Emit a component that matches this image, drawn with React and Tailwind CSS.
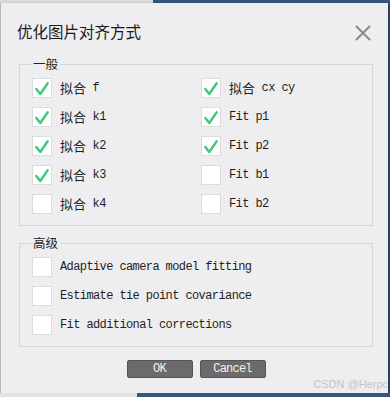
import React from 'react';

const mono = { fontFamily: '"Liberation Mono", "Noto Sans CJK SC", monospace' };
const cjk = { fontFamily: '"Noto Sans CJK SC", "Noto Sans", sans-serif' };

const general = [
  ['拟合', 'f', true],
  ['拟合', 'cx cy', true],
  ['拟合', 'k1', true],
  [null, 'Fit p1', true],
  ['拟合', 'k2', true],
  [null, 'Fit p2', true],
  ['拟合', 'k3', true],
  [null, 'Fit b1', false],
  ['拟合', 'k4', false],
  [null, 'Fit b2', false],
];

const advanced = [
  'Adaptive camera model fitting',
  'Estimate tie point covariance',
  'Fit additional corrections',
];

function Box({ checked }) {
  return (
    <div className="w-[20px] h-[20px] bg-white border border-[#dcdcdc] shrink-0">
      {checked && (
        <svg width="18" height="18" viewBox="0 0 18 18">
          <path d="M3.3 10 L7.3 15 L14.7 4.3" fill="none" stroke="#3cc97a" strokeWidth="2.4" strokeLinecap="round" strokeLinejoin="round" />
        </svg>
      )}
    </div>
  );
}

function Label({ cn, latin }) {
  return (
    <span className="flex items-center text-[#1e1e1e] whitespace-pre">
      {cn && <span className="text-[13px] leading-[20px]" style={cjk}>{cn}</span>}
      <span className="text-[12px] leading-[20px] tracking-[-0.6px]" style={mono}>
        {cn ? ' ' + latin : latin}
      </span>
    </span>
  );
}

function Group({ title, children, className = '' }) {
  return (
    <fieldset className={`ml-[18px] mr-[15px] border border-[#d6d6d8] pl-[12px] pt-[7px] pb-[11px] ${className}`}>
      <legend className="px-[2px] -ml-[1px] text-[12.5px] leading-[14px] text-[#222]" style={cjk}>
        {title}
      </legend>
      {children}
    </fieldset>
  );
}

export default function App() {
  return (
    <div className="w-[390px] h-[397px] bg-[#2f4f78] overflow-hidden flex flex-col">
      <div className="h-[3px] flex shrink-0">
        <div className="w-[153px] bg-[#dcdcdc]" />
        <div className="flex-1 bg-[#34557e]" />
      </div>
      <div className="w-[388px] h-[390px] bg-[#eeeef0] border-l border-[#b8b8b8] shadow-[1px_1px_3px_rgba(0,0,0,0.35)] flex flex-col shrink-0">
        <div className="flex items-start justify-between h-[54px] pl-[16px] pr-[16px]">
          <h1 className="pt-[17px] text-[15.5px] leading-[22px] text-[#1a1a1a]" style={cjk}>
            优化图片对齐方式
          </h1>
          <svg className="mt-[21px]" width="18" height="18" viewBox="0 0 18 18">
            <path d="M2 2 L16 16 M16 2 L2 16" stroke="#8a8a8a" strokeWidth="2" />
          </svg>
        </div>

        <Group title="一般">
          <div className="grid grid-cols-[169px_1fr] gap-y-[9px]">
            {general.map(([cn, latin, checked], i) => (
              <div key={i} className="flex items-center gap-[8px]">
                <Box checked={checked} />
                <Label cn={cn} latin={latin} />
              </div>
            ))}
          </div>
        </Group>

        <Group title="高级" className="mt-[10px]">
          <div className="flex flex-col gap-[9px]">
            {advanced.map((t) => (
              <div key={t} className="flex items-center gap-[8px]">
                <Box checked={false} />
                <Label latin={t} />
              </div>
            ))}
          </div>
        </Group>

        <div className="relative flex justify-center gap-[7px] mt-[13px] pl-[3px]">
          {['OK', 'Cancel'].map((b) => (
            <button
              key={b}
              className="w-[66px] h-[18px] bg-[#6b6b6b] border border-[#555] rounded-[2px] text-[#f2f2f2] text-[12px] leading-[16px] tracking-[-0.8px]"
              style={mono}
            >
              {b}
            </button>
          ))}
          <span
            className="absolute right-[0px] top-[18px] text-[11px] leading-[12px] text-[#c4c4c8]"
            style={{ fontFamily: '"Liberation Sans", Arial, sans-serif' }}
          >
            CSDN @Herpc
          </span>
        </div>
      </div>
      <div className="flex-1 flex">
        <div className="w-[137px] bg-[#e2e2e2]" />
        <div className="flex-1 bg-[#34557e]" />
      </div>
    </div>
  );
}
